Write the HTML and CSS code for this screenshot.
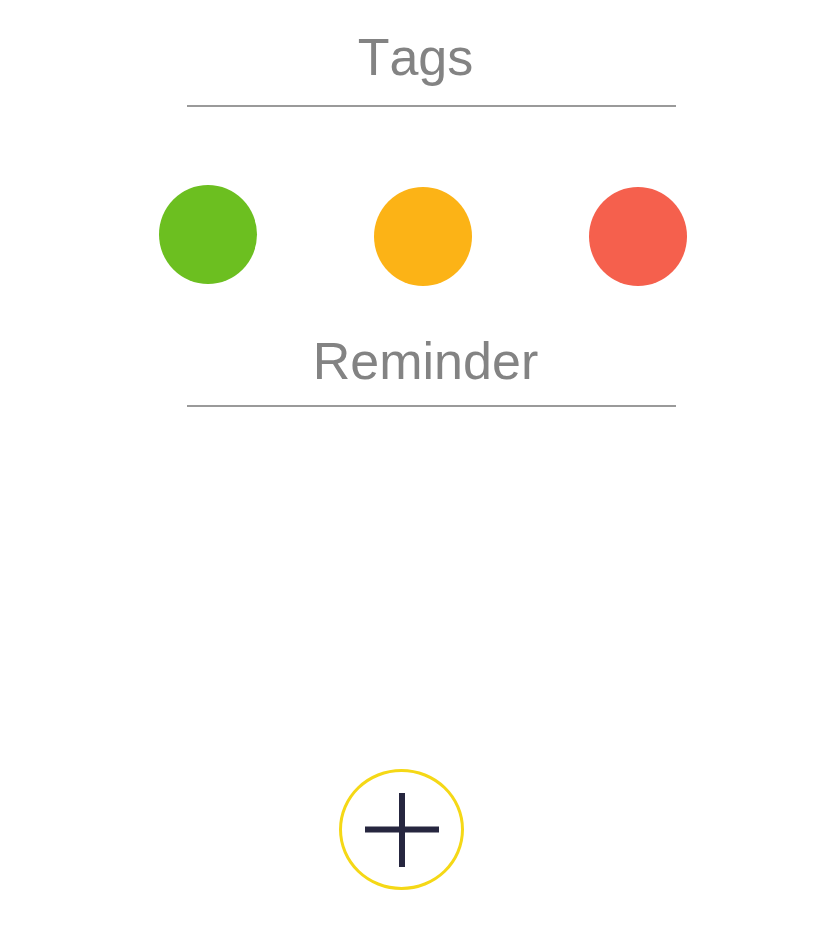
FILE: index.html
```html
<!DOCTYPE html>
<html>
<head>
<meta charset="utf-8">
<link rel="stylesheet" href="styles.css">
</head>
<body>
<main class="screen">
  <section class="field field-tags">
    <div class="label label-tags">Tags</div>
    <div class="rule"></div>
  </section>
  <div class="dots">
    <span class="dot dot-green"></span>
    <span class="dot dot-orange"></span>
    <span class="dot dot-red"></span>
  </div>
  <section class="field field-reminder">
    <div class="label label-reminder">Reminder</div>
    <div class="rule"></div>
  </section>
  <div class="add-wrap">
    <button class="add" aria-label="Add">
      <svg width="74" height="74" viewBox="0 0 74 74">
        <path d="M37 0V74M0 36.5H74" stroke="#26263f" stroke-width="6" fill="none"/>
      </svg>
    </button>
  </div>
</main>
</body>
</html>
```
FILE: styles.css
```css
html, body {
  margin: 0;
  padding: 0;
  background: #ffffff;
}

.screen {
  width: 831px;
  height: 939px;
  display: flex;
  flex-direction: column;
  font-family: "Liberation Sans", Arial, sans-serif;
}

.field {
  width: 489px;
  margin-left: 187px;
  display: flex;
  flex-direction: column;
}

.field-tags {
  margin-top: 27px;
}

.label {
  font-size: 52px;
  line-height: 60px;
  color: #838383;
  text-align: center;
  font-kerning: none;
}

.label-tags {
  padding-right: 32px;
  margin-bottom: 18px;
}

.label-reminder {
  padding-right: 12px;
  margin-bottom: 14px;
}

.rule {
  height: 2px;
  background: #9a9a9a;
}

.dots {
  display: flex;
  align-items: flex-start;
  gap: 117px;
  margin-top: 78px;
  margin-left: 159px;
}

.dot {
  width: 98px;
  height: 99px;
  border-radius: 50%;
  display: block;
}

.dot-green {
  background: #6cbf20;
}

.dot-orange {
  background: #fcb316;
  margin-top: 2px;
}

.dot-red {
  background: #f5604d;
  margin-top: 2px;
}

.field-reminder {
  margin-top: 45px;
}

.add-wrap {
  display: flex;
  margin-top: 362px;
  margin-left: 339px;
}

.add {
  box-sizing: border-box;
  width: 125px;
  height: 121px;
  border: 3px solid #f5d816;
  border-radius: 50%;
  background: #ffffff;
  padding: 0;
  display: flex;
  align-items: center;
  justify-content: center;
}

.add svg {
  display: block;
}
```
